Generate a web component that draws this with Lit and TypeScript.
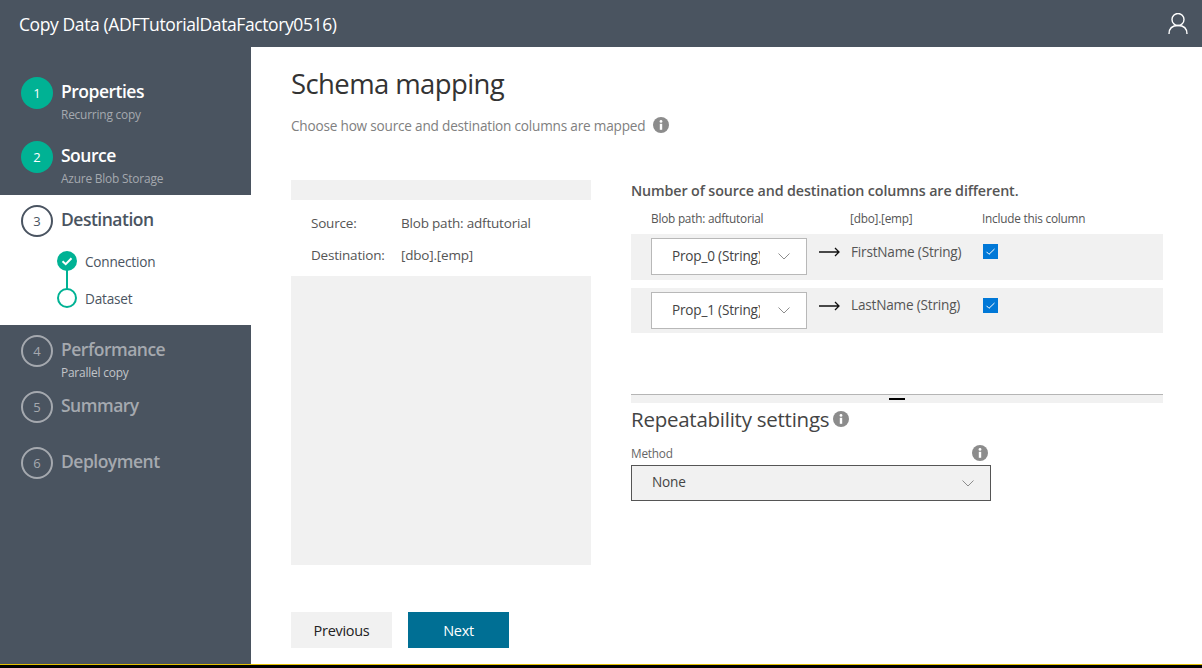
import { LitElement, html, css } from "lit";
import { customElement } from "lit/decorators.js";

const infoIcon = (size: number) => html`<svg class="info" width=${size} height=${size} viewBox="0 0 16 16">
  <circle cx="8" cy="8" r="8" fill="#8c8c8c"></circle>
  <circle cx="8" cy="4.4" r="1.4" fill="#fff"></circle>
  <rect x="6.8" y="6.8" width="2.4" height="6" fill="#fff"></rect>
</svg>`;

const chevron = html`<svg class="chev" width="12" height="7" viewBox="0 0 12 7">
  <path d="M.5.5 6 6l5.500-5.500" fill="none" stroke="#808080" stroke-width=".9"></path>
</svg>`;

const arrow = html`<svg class="arrow" width="21" height="10" viewBox="0 0 21 10">
  <path d="M0 5h20M16 1l4 4-4 4" fill="none" stroke="#111" stroke-width="1.300"></path>
</svg>`;

const boxTick = html`<svg width="15" height="15" viewBox="0 0 15 15">
  <path d="M3.500 7.800 6 10.300 11.500 5" fill="none" stroke="#fff" stroke-width="1"></path>
</svg>`;

const dotTick = html`<svg width="16" height="16" viewBox="0 0 16 16">
  <path d="M3.500 8.200 6.700 11.200 12.500 5.200" fill="none" stroke="#fff" stroke-width="2"></path>
</svg>`;

@customElement("app-root")
export class AppRoot extends LitElement {
  static styles = css`
    :host {
      display: flex;
      flex-direction: column;
      height: 668px;
      font-family: "Open Sans", "Noto Sans", sans-serif;
      color: #4a5461;
      background: #000;
      overflow: hidden;
    }
    .top {
      height: 47px;
      flex: none;
      background: #4a5460;
      display: flex;
      align-items: center;
      justify-content: space-between;
      padding: 0 14px 0 19px;
      color: #fff;
      font-size: 17.500px;
      letter-spacing: -0.4px;
    }
    .top svg {
      display: block;
    }
    .body {
      height: 617px;
      flex: none;
      display: flex;
      background: #fff;
    }
    .line {
      height: 1px;
      flex: none;
      background: #e3c000;
    }
    .side {
      width: 251px;
      flex: none;
      background: #4a5460;
      padding-top: 30px;
    }
    .step {
      display: flex;
      gap: 8px;
      padding-left: 21px;
      color: #fff;
      height: 56px;
    }
    .step.tall {
      height: 64px;
    }
    .step.short {
      height: 54px;
    }
    .num {
      width: 32px;
      height: 32px;
      flex: none;
      box-sizing: border-box;
      border-radius: 50%;
      display: flex;
      align-items: center;
      justify-content: center;
      font-size: 13px;
      background: #00b294;
    }
    .name {
      font-size: 17.500px;
      font-weight: 600;
      line-height: 28px;
      letter-spacing: -0.5px;
    }
    .sub {
      font-size: 11.900px;
      line-height: 16px;
      margin-top: 1px;
      color: #a5a9af;
      letter-spacing: -0.2px;
    }
    .gap {
      height: 10px;
    }
    .current {
      background: #fff;
      height: 130px;
      box-sizing: border-box;
      padding-top: 10px;
    }
    .current .step {
      color: #4a5461;
      height: 46px;
    }
    .current .num {
      background: #fff;
      border: 2px solid #4a5461;
    }
    .sublist {
      padding-left: 57px;
      display: flex;
      flex-direction: column;
    }
    .subitem {
      display: flex;
      align-items: center;
      gap: 8px;
      height: 20px;
      font-size: 13.600px;
      letter-spacing: -0.2px;
    }
    .subitem span {
      margin-top: 1px;
    }
    .subitem + .subitem {
      margin-top: 17px;
    }
    .dot {
      width: 20px;
      height: 20px;
      flex: none;
      box-sizing: border-box;
      border-radius: 50%;
      border: 2px solid #00b294;
      position: relative;
    }
    .dot.done {
      background: #00b294;
      border: none;
    }
    .dot.done svg {
      position: absolute;
      left: 2px;
      top: 2px;
    }
    .dot.done::after {
      content: "";
      position: absolute;
      left: 9px;
      top: 19px;
      width: 2px;
      height: 19px;
      background: #00b294;
    }
    .dim {
      color: #a5a9af;
    }
    .dim .num {
      background: none;
      border: 2px solid #a5a9af;
    }
    .dim .sub {
      color: #c2c5c9;
    }
    .main {
      flex: 1;
      box-sizing: border-box;
      padding: 0 39px 0 40px;
      display: flex;
      flex-direction: column;
    }
    h1 {
      margin: 18px 0 0;
      font-size: 27.500px;
      font-weight: 400;
      line-height: 38px;
      color: #333;
      letter-spacing: -0.6px;
    }
    .desc {
      display: flex;
      align-items: center;
      gap: 8px;
      margin-top: 12px;
      height: 20px;
      font-size: 13.600px;
      letter-spacing: -0.2px;
      color: #808080;
    }
    .info {
      display: block;
      flex: none;
    }
    .cols {
      display: flex;
      gap: 40px;
      margin-top: 45px;
    }
    .panel {
      width: 300px;
      height: 385px;
      flex: none;
      background: #f1f1f1;
      padding-top: 20px;
      box-sizing: border-box;
    }
    .pairs {
      height: 76px;
      background: #fff;
      padding: 7px 20px 0;
      box-sizing: border-box;
      display: grid;
      grid-template-columns: 90px 1fr;
      grid-auto-rows: 32px;
      align-items: center;
      font-size: 13.500px;
      letter-spacing: -0.2px;
      color: #555;
    }
    .right {
      flex: 1;
      min-width: 0;
    }
    .warn {
      font-size: 14.300px;
      font-weight: 600;
      line-height: 20px;
      margin-top: 1px;
      letter-spacing: -0.12px;
      color: #555;
    }
    .heads {
      display: grid;
      grid-template-columns: 199px 132px 1fr;
      padding-left: 20px;
      font-size: 11.800px;
      line-height: 16px;
      margin-top: 9px;
      letter-spacing: -0.22px;
      color: #555;
    }
    .rowset {
      margin-top: 8px;
      display: flex;
      flex-direction: column;
      gap: 8px;
    }
    .row {
      height: 45px;
      background: #f1f1f1;
      display: flex;
      padding: 4px 0 0 20px;
      box-sizing: border-box;
    }
    .row:first-child {
      height: 46px;
    }
    .picker {
      width: 156px;
      height: 37px;
      box-sizing: border-box;
      border: 1px solid #b8b8b8;
      background: #fff;
      display: flex;
      align-items: center;
      padding: 0 0 3px 20px;
      font-size: 13.600px;
      letter-spacing: -0.2px;
      color: #444;
    }
    .picker span {
      width: 88px;
      overflow: hidden;
      white-space: nowrap;
      flex: none;
    }
    .picker .chev {
      margin: 3px 0 0 18px;
    }
    .arrow {
      margin: 9px 0 0 12px;
      flex: none;
    }
    .target {
      width: 132px;
      margin-left: 11px;
      flex: none;
      font-size: 13.600px;
      letter-spacing: -0.2px;
      line-height: 28px;
      color: #555;
    }
    .row + .row .target {
      line-height: 26px;
    }
    .check {
      width: 15px;
      height: 15px;
      background: #0078d7;
      flex: none;
      margin-top: 6px;
    }
    .check svg {
      display: block;
    }
    .rule {
      margin-top: 61px;
      height: 9px;
      box-sizing: border-box;
      border-top: 1px solid #b5b5b5;
      background: #f1f1f1;
      display: flex;
      justify-content: center;
    }
    .rule i {
      display: block;
      width: 16px;
      height: 2px;
      margin-top: 3px;
      background: #000;
    }
    h2 {
      margin: 2px 0 0;
      display: flex;
      align-items: center;
      gap: 4px;
      font-size: 20.500px;
      font-weight: 400;
      line-height: 28px;
      letter-spacing: -0.25px;
      color: #444;
    }
    .method {
      width: 360px;
    }
    .method-label {
      margin: 10px 0 3px;
      height: 19px;
      display: flex;
      justify-content: space-between;
      align-items: center;
      padding-right: 3px;
      font-size: 11.800px;
      letter-spacing: -0.2px;
      color: #666;
    }
    .select {
      height: 36px;
      box-sizing: border-box;
      border: 1px solid #555;
      background: #f1f1f1;
      display: flex;
      align-items: center;
      justify-content: space-between;
      padding: 0 16px 3px 20px;
      font-size: 13.600px;
      letter-spacing: -0.2px;
      color: #444;
    }
    .select .chev {
      margin-top: 3px;
    }
    .actions {
      display: flex;
      gap: 16px;
      margin-top: 47px;
    }
    button {
      width: 101px;
      height: 36px;
      border: none;
      padding: 0;
      font: inherit;
      font-size: 14.500px;
      letter-spacing: -0.3px;
      background: #f1f1f1;
      color: #222;
    }
    button.primary {
      background: #006f94;
      color: #fff;
    }
  `;

  render() {
    return html`
      <div class="top">
        <span>Copy Data (ADFTutorialDataFactory0516)</span>
        <svg width="20" height="22" viewBox="0 0 20 22">
          <circle cx="10" cy="6.500" r="6" fill="none" stroke="#fff" stroke-width="1.400"></circle>
          <path d="M1 21c0-5.500 3.500-8.500 9-8.500s9 3 9 8.500" fill="none" stroke="#fff" stroke-width="1.400"></path>
        </svg>
      </div>
      <div class="body">
        <nav class="side">
          <div class="step tall">
            <div class="num">1</div>
            <div><div class="name">Properties</div><div class="sub">Recurring copy</div></div>
          </div>
          <div class="step short">
            <div class="num">2</div>
            <div><div class="name">Source</div><div class="sub">Azure Blob Storage</div></div>
          </div>
          <div class="current">
            <div class="step">
              <div class="num">3</div>
              <div class="name">Destination</div>
            </div>
            <div class="sublist">
              <div class="subitem"><div class="dot done">${dotTick}</div><span>Connection</span></div>
              <div class="subitem"><div class="dot"></div><span>Dataset</span></div>
            </div>
          </div>
          <div class="gap"></div>
          <div class="step dim">
            <div class="num">4</div>
            <div><div class="name">Performance</div><div class="sub">Parallel copy</div></div>
          </div>
          <div class="step dim">
            <div class="num">5</div>
            <div class="name">Summary</div>
          </div>
          <div class="step dim">
            <div class="num">6</div>
            <div class="name">Deployment</div>
          </div>
        </nav>
        <main class="main">
          <h1>Schema mapping</h1>
          <div class="desc">Choose how source and destination columns are mapped ${infoIcon(16)}</div>
          <div class="cols">
            <div class="panel">
              <div class="pairs">
                <span>Source:</span><span>Blob path: adftutorial</span>
                <span>Destination:</span><span>[dbo].[emp]</span>
              </div>
            </div>
            <div class="right">
              <div class="warn">Number of source and destination columns are different.</div>
              <div class="heads">
                <span>Blob path: adftutorial</span><span>[dbo].[emp]</span><span>Include this column</span>
              </div>
              <div class="rowset">
                <div class="row">
                  <div class="picker"><span>Prop_0 (String)</span>${chevron}</div>
                  ${arrow}
                  <div class="target">FirstName (String)</div>
                  <div class="check">${boxTick}</div>
                </div>
                <div class="row">
                  <div class="picker"><span>Prop_1 (String)</span>${chevron}</div>
                  ${arrow}
                  <div class="target">LastName (String)</div>
                  <div class="check">${boxTick}</div>
                </div>
              </div>
              <div class="rule"><i></i></div>
              <h2>Repeatability settings ${infoIcon(16)}</h2>
              <div class="method">
                <div class="method-label"><span>Method</span>${infoIcon(16)}</div>
                <div class="select"><span>None</span>${chevron}</div>
              </div>
            </div>
          </div>
          <div class="actions">
            <button>Previous</button>
            <button class="primary">Next</button>
          </div>
        </main>
      </div>
      <div class="line"></div>
    `;
  }
}
